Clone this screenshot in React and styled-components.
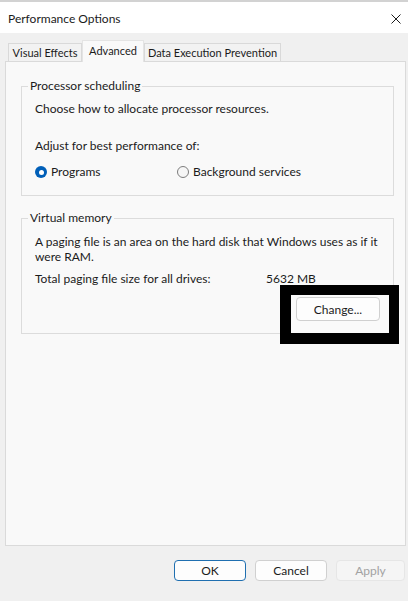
import React from 'react'
import styled, { createGlobalStyle } from 'styled-components';

const GlobalStyle = createGlobalStyle`
    html, body {
        margin: 0;
        padding: 0;
        background: #f0f0f0;
        overflow: hidden;
    }
    body {
        font-family: Lato, "Noto Sans", sans-serif;
        font-size: 12px;
        color: #1b1b1b;
    }
`;

const Window = styled.div`
    width: 408px;
    height: 601px;

    display: flex;
    flex-direction: column;

    background-color: #f0f0f0;
`;

const TitleBar = styled.div`
    height: 31px;
    flex-shrink: 0;

    border-top: 2px solid #d2d2d2;
    background-color: #ffffff;

    display: flex;
    flex-direction: row;
    align-items: center;
    justify-content: space-between;

    padding: 0 7px 0 8px;
`;

const Title = styled.span`
    font-size: 12px;
    line-height: 16px;
    margin-top: 2px;
`;

const CloseIcon = styled.svg`
    width: 10px;
    height: 10px;
    margin-top: 2px;
`;

const Body = styled.div`
    flex: 1;

    display: flex;
    flex-direction: column;

    padding: 7px 2px 0 5px;
`;

const TabStrip = styled.div`
    height: 21px;
    padding-left: 3px;

    display: flex;
    flex-direction: row;
    align-items: flex-end;
`;

const Tab = styled.div`
    width: ${(p) => p.$w}px;
    height: ${(p) => (p.$active ? '22px' : '18px')};
    margin-bottom: ${(p) => (p.$active ? '-1px' : '0')};

    position: relative;
    z-index: ${(p) => (p.$active ? 2 : 1)};

    display: flex;
    justify-content: center;
    align-items: ${(p) => (p.$active ? 'flex-start' : 'center')};

    box-sizing: border-box;
    border: 1px solid ${(p) => (p.$active ? '#e4e4e4' : '#d9d9d9')};
    border-bottom: none;
    background-color: ${(p) => (p.$active ? '#f9f9f9' : '#f2f2f2')};

    font-size: 11px;
    white-space: nowrap;

    & > span {
        line-height: 16px;
        padding-top: ${(p) => (p.$active ? '2px' : '0')};
    }
`;

const Panel = styled.div`
    flex: 1;

    border: 1px solid #dadada;
    background-color: #f9f9f9;

    padding: 16px 11px 0 15px;

    display: flex;
    flex-direction: column;
    gap: 14px;
`;

const GroupBox = styled.fieldset`
    margin: 0;
    padding: 0 12px ${(p) => p.$bottom}px 13px;

    border: 1px solid #dcdcdc;
    min-width: 0;

    & > legend {
        padding: 0 2px;
        margin-left: -7px;
        line-height: 16px;
    }
`;

const Line = styled.div`
    line-height: ${(p) => p.$lh || 16}px;
    margin-top: ${(p) => p.$top || 0}px;
`;

const RadioRow = styled.div`
    margin-top: 10px;

    display: grid;
    grid-template-columns: 142px auto;
`;

const RadioItem = styled.label`
    display: flex;
    flex-direction: row;
    align-items: center;
    gap: 4px;

    line-height: 16px;
`;

const RadioDot = styled.span`
    width: ${(p) => (p.$checked ? '12px' : '10px')};
    height: ${(p) => (p.$checked ? '12px' : '10px')};
    border-radius: 50%;

    border: ${(p) => (p.$checked ? 'none' : '1px solid #7d7d7d')};
    background-color: ${(p) => (p.$checked ? '#005fb8' : '#f6f6f6')};

    display: flex;
    align-items: center;
    justify-content: center;

    &::after {
        content: '';
        display: ${(p) => (p.$checked ? 'block' : 'none')};
        width: 5px;
        height: 5px;
        border-radius: 50%;
        background-color: #ffffff;
    }
`;

const SizeRow = styled.div`
    margin-top: 7px;
    line-height: 16px;

    display: grid;
    grid-template-columns: 231px auto;
`;

const ButtonRow = styled.div`
    margin-top: 10px;

    display: flex;
    flex-direction: row;
    justify-content: flex-end;
    padding-right: 1px;
`;

const Marked = styled.div`
    position: relative;
`;

// black annotation frame drawn around the Change button
const MarkFrame = styled.span`
    position: absolute;
    left: -16px;
    top: -12px;
    right: -19px;
    bottom: -23px;
    z-index: 0;

    border-style: solid;
    border-color: #000000;
    border-width: 10px 10px 11px 11px;
    background-color: #fafafa;
`;

const Button = styled.button`
    width: ${(p) => p.$w || 72}px;
    height: ${(p) => p.$h || 21}px;

    position: relative;
    z-index: 1;

    padding: 0;
    border-radius: 4px;
    border: 1px solid ${(p) => (p.$primary ? '#1f6fb0' : p.disabled ? '#e6e6e6' : '#d0d0d0')};
    background-color: ${(p) => (p.disabled ? '#f5f5f5' : '#fdfdfd')};

    font-family: inherit;
    font-size: 12px;
    color: ${(p) => (p.disabled ? '#a2a2a2' : '#1b1b1b')};
`;

const Footer = styled.div`
    height: 41px;
    flex-shrink: 0;

    display: flex;
    flex-direction: row;
    justify-content: flex-end;
    align-items: flex-start;
    gap: 9px;

    padding: 14px 3px 0 0;
`;

export default function App() {
    return (
        <Window>
            <GlobalStyle />

            <TitleBar>
                <Title>Performance Options</Title>
                <CloseIcon viewBox="0 0 10 10">
                    <path d="M0.5 0.5 L9.5 9.5 M9.5 0.5 L0.5 9.5" stroke="#1b1b1b" strokeWidth="1" fill="none" />
                </CloseIcon>
            </TitleBar>

            <Body>
                <TabStrip>
                    <Tab $w={74}><span>Visual Effects</span></Tab>
                    <Tab $active $w={62}><span>Advanced</span></Tab>
                    <Tab $w={137}><span>Data Execution Prevention</span></Tab>
                </TabStrip>

                <Panel>
                    <GroupBox $bottom={15}>
                        <legend>Processor scheduling</legend>
                        <Line $top={7}>Choose how to allocate processor resources.</Line>
                        <Line $top={21}>Adjust for best performance of:</Line>
                        <RadioRow>
                            <RadioItem><RadioDot $checked />Programs</RadioItem>
                            <RadioItem><RadioDot />Background services</RadioItem>
                        </RadioRow>
                    </GroupBox>

                    <GroupBox $bottom={12}>
                        <legend>Virtual memory</legend>
                        <Line $top={8} $lh={15}>
                            A paging file is an area on the hard disk that Windows uses as if it were RAM.
                        </Line>
                        <SizeRow>
                            <span>Total paging file size for all drives:</span>
                            <span>5632 MB</span>
                        </SizeRow>
                        <ButtonRow>
                            <Marked>
                                <MarkFrame />
                                <Button $w={84} $h={24}>Change...</Button>
                            </Marked>
                        </ButtonRow>
                    </GroupBox>
                </Panel>
            </Body>

            <Footer>
                <Button $primary>OK</Button>
                <Button>Cancel</Button>
                <Button disabled $w={69}>Apply</Button>
            </Footer>
        </Window>
    );
}
